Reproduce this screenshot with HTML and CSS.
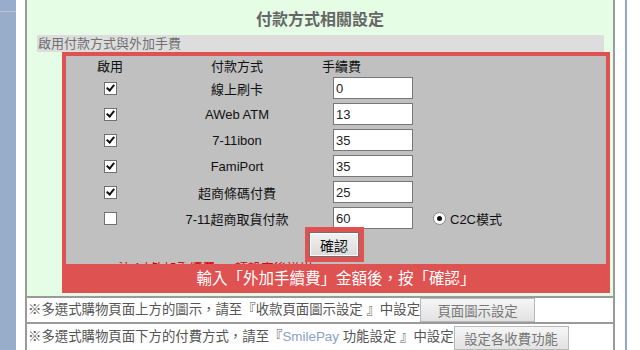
FILE: index.html
```html
<!DOCTYPE html>
<html lang="zh-Hant">

<head>
    <meta charset="UTF-8">
    <meta name="viewport" content="width=device-width, initial-scale=1.0">
    <title>付款方式相關設定</title>
    <link rel="stylesheet" href="styles.css">
</head>

<body>
    <div class="page">
        <div class="side"><div class="side-top"></div></div>
        <div class="main">
            <div class="setup">
                <h2 class="title">付款方式相關設定</h2>
                <div class="bar">啟用付款方式與外加手費</div>
                <div class="box">
                    <div class="inner">
                        <div class="row head">
                            <div class="c1">啟用</div>
                            <div class="c2">付款方式</div>
                            <div class="c3">手續費</div>
                        </div>
                        <div class="row">
                            <div class="c1"><span class="chk on"></span></div>
                            <div class="c2">線上刷卡</div>
                            <div class="c3"><input class="fee" type="text" value="0"></div>
                        </div>
                        <div class="row">
                            <div class="c1"><span class="chk on"></span></div>
                            <div class="c2">AWeb ATM</div>
                            <div class="c3"><input class="fee" type="text" value="13"></div>
                        </div>
                        <div class="row">
                            <div class="c1"><span class="chk on"></span></div>
                            <div class="c2">7-11ibon</div>
                            <div class="c3"><input class="fee" type="text" value="35"></div>
                        </div>
                        <div class="row">
                            <div class="c1"><span class="chk on"></span></div>
                            <div class="c2">FamiPort</div>
                            <div class="c3"><input class="fee" type="text" value="35"></div>
                        </div>
                        <div class="row">
                            <div class="c1"><span class="chk on"></span></div>
                            <div class="c2">超商條碼付費</div>
                            <div class="c3"><input class="fee" type="text" value="25"></div>
                        </div>
                        <div class="row">
                            <div class="c1"><span class="chk"></span></div>
                            <div class="c2">7-11超商取貨付款</div>
                            <div class="c3"><input class="fee" type="text" value="60"></div>
                            <div class="c4"><span class="radio"></span>C2C模式</div>
                        </div>
                        <div class="btn-row">
                            <div class="btn-wrap"><button class="ok">確認</button></div>
                        </div>
                        <div class="note">注：「外加手續費」，請設定後送出</div>
                    </div>
                    <div class="band">輸入「外加手續費」金額後，按「確認」</div>
                </div>
            </div>
            <div class="line"><span class="txt">※多選式購物頁面上方的圖示，請至『收款頁面圖示設定 』中設定</span><button class="go">頁面圖示設定</button></div>
            <div class="line"><span class="txt">※多選式購物頁面下方的付費方式，請至『<span class="blue">SmilePay</span> 功能設定 』中設定</span><button class="go">設定各收費功能</button></div>
        </div>
        <div class="rail"></div>
    </div>
</body>

</html>
```

FILE: styles.css
```css
body {
    margin: 0;
    background: #ffffff;
    font-family: "Liberation Sans", "Noto Sans CJK TC", sans-serif;
}

.page {
    display: flex;
    height: 350px;
    overflow: hidden;
}

.side {
    width: 16px;
    background: #98adcb;
}

.side-top {
    height: 11px;
    border-bottom: 1px solid #b4c4dc;
}

.main {
    width: 586px;
    margin-left: 9px;
    border-left: 2px solid #9a9a9a;
    border-right: 2px solid #9a9a9a;
}

.rail {
    width: 2px;
    margin-left: 10px;
    background: #8fa8cc;
}

.setup {
    background: #e5fde5;
    padding: 8px 0 3px;
}

.title {
    margin: 0;
    height: 24px;
    line-height: 24px;
    text-align: center;
    font-size: 16px;
    font-weight: bold;
    color: #666666;
}

.bar {
    margin: 3px 9px 0 10px;
    height: 17px;
    line-height: 17px;
    padding-left: 1px;
    background: #dddddd;
    font-size: 13px;
    color: #707070;
}

.box {
    margin-left: 35px;
    width: 548px;
    background: #df5252;
    padding-top: 4px;
}

.inner {
    margin: 0 4px;
    height: 208px;
    background: #c0c0c0;
    overflow: hidden;
}

.row {
    display: flex;
    align-items: center;
    height: 26px;
    font-size: 13px;
    color: #111111;
}

.row.head {
    height: 19px;
}

.c1 {
    width: 88px;
    display: flex;
    justify-content: center;
}

.c2 {
    width: 166px;
    text-align: center;
}

.c3 {
    width: 101px;
    padding-left: 13px;
    box-sizing: border-box;
    display: flex;
}

.head .c3 {
    padding-left: 2px;
}

.c4 {
    display: flex;
    align-items: center;
    padding-left: 12px;
    gap: 4px;
}

.chk {
    width: 11px;
    height: 11px;
    border: 1px solid #707070;
    background: #ffffff;
    display: flex;
    justify-content: center;
    align-items: center;
}

.chk.on::after {
    content: "";
    width: 3px;
    height: 6px;
    margin-top: -2px;
    border-right: 2px solid #111111;
    border-bottom: 2px solid #111111;
    transform: rotate(40deg);
}

.radio {
    width: 11px;
    height: 11px;
    border: 1px solid #8a8a8a;
    border-radius: 50%;
    background: #ffffff;
    display: flex;
    justify-content: center;
    align-items: center;
}

.radio::after {
    content: "";
    width: 5px;
    height: 5px;
    border-radius: 50%;
    background: #111111;
}

.fee {
    width: 80px;
    height: 22px;
    box-sizing: border-box;
    margin: 0;
    padding: 0 2px;
    border: 1px solid #777777;
    background: #ffffff;
    font-family: "Liberation Sans", sans-serif;
    font-size: 13px;
    color: #222222;
}

.btn-row {
    display: flex;
    justify-content: center;
    margin-top: -4px;
    padding-right: 3px;
}

.btn-wrap {
    background: #df5252;
    padding: 5px 5px 5px 4px;
}

.ok {
    display: block;
    width: 50px;
    height: 25px;
    margin: 0;
    padding: 0;
    border: 1px solid #707070;
    box-shadow: inset 0 0 0 1px #fbfbfb;
    background: linear-gradient(#f2f2f2, #dadada);
    font-family: "Liberation Sans", "Noto Sans CJK TC", sans-serif;
    font-size: 14px;
    color: #111111;
}

.note {
    padding-left: 52px;
    height: 3px;
    overflow: hidden;
    font-size: 13px;
    line-height: 12px;
    color: #e00000;
}

.band {
    height: 29px;
    line-height: 29px;
    text-align: center;
    font-size: 15.5px;
    color: #ffffff;
}

.line {
    display: flex;
    align-items: center;
    border-top: 2px solid #9a9a9a;
    height: 24px;
    padding-left: 1px;
    font-size: 13.4px;
    color: #555555;
    white-space: nowrap;
}

.line + .line {
    height: 26px;
    align-items: flex-start;
    padding-top: 2px;
}

.line .txt {
    line-height: 22px;
}

.blue {
    color: #8ba0c6;
}

.go {
    width: 115px;
    height: 24px;
    margin: 0;
    padding: 0;
    border: 1px solid #b8b8b8;
    background: linear-gradient(#f6f6f6, #e2e2e2);
    font-family: "Liberation Sans", "Noto Sans CJK TC", sans-serif;
    font-size: 13.4px;
    color: #777777;
}
```
